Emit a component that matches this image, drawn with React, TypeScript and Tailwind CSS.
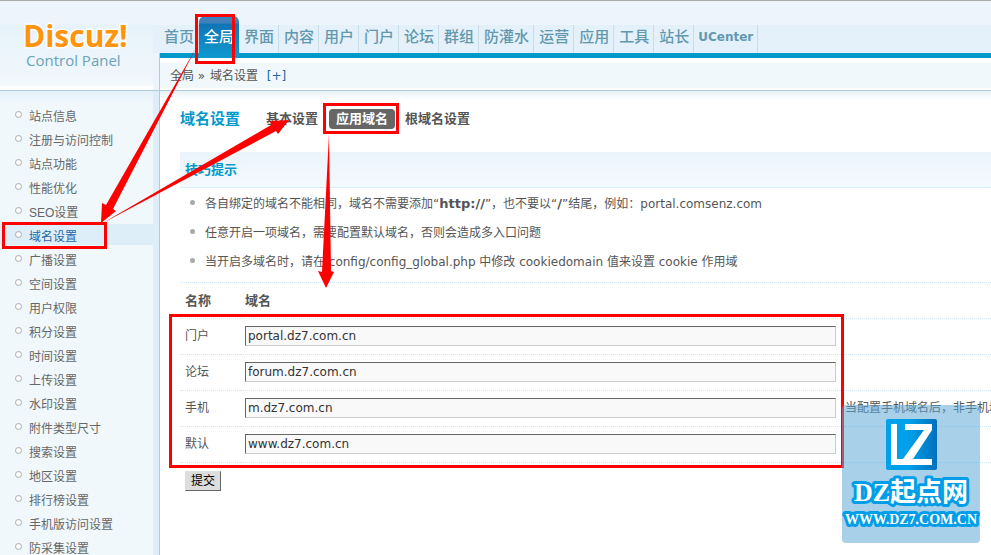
import React from "react";

const navItems = ["首页", "全局", "界面", "内容", "用户", "门户", "论坛", "群组", "防灌水", "运营", "应用", "工具", "站长", "UCenter"];

const menuItems = [
  "站点信息", "注册与访问控制", "站点功能", "性能优化", "SEO设置", "域名设置", "广播设置", "空间设置", "用户权限", "积分设置",
  "时间设置", "上传设置", "水印设置", "附件类型尺寸", "搜索设置", "地区设置", "排行榜设置", "手机版访问设置", "防采集设置",
];

const domains = [
  { id: "portal", label: "门户", value: "portal.dz7.com.cn", note: "" },
  { id: "forum", label: "论坛", value: "forum.dz7.com.cn", note: "" },
  { id: "mobile", label: "手机", value: "m.dz7.com.cn", note: "当配置手机域名后，非手机域名" },
  { id: "default", label: "默认", value: "www.dz7.com.cn", note: "" },
];

function Logo() {
  return (
    <div className="flex h-[89px] w-[153px] shrink-0 flex-col border-b-4 border-white bg-linear-to-b from-[#edf4fc] from-25% via-[#e6f2fa] via-30% to-[#f2f8fc] pt-4 pl-[22px]">
      <svg width="112" height="54" viewBox="0 0 112 54" className="overflow-visible" role="img" aria-label="Discuz! Control Panel">
        <text x="1" y="30" fontSize="30" fontWeight="700" fill="#ff9410" stroke="#ffffff" strokeWidth="3" paintOrder="stroke" className="font-['Open_Sans',sans-serif]">Discuz!</text>
        <text x="4" y="49" fontSize="15" fill="#6ba3b8" className="font-['Open_Sans',sans-serif]">Control Panel</text>
      </svg>
    </div>
  );
}

function Header() {
  return (
    <header className="flex border-t border-[#aaaaaa]">
      <Logo />
      <div className="min-w-0 flex-1 bg-[#edf4fc] pt-6">
        <nav className="flex h-7 bg-[#e4f1fa] pl-[6px] text-[15px] leading-6 font-medium text-[#6298ae]">
          {navItems.map((item) =>
            item === "全局" ? (
              <a key={item} href="#" className="z-10 -mt-[9px] h-[42px] w-10 shrink-0 rounded-t-md bg-linear-to-b from-[#4080bb] from-15% via-[#1175b5] via-20% to-[#0d9ad0] pt-[9px] text-center text-white">{item}</a>
            ) : item === "UCenter" ? (
              <a key={item} href="#" className="shrink-0 border-r border-[#c9dde8] px-1 text-xs leading-6 font-bold">{item}</a>
            ) : (
              <a key={item} href="#" className="flex shrink-0 items-start border-r border-[#c9dde8] pr-1 pl-[5px]">{item}</a>
            ),
          )}
        </nav>
        <div className="pl-[6px]">
          <div className="border-l border-[#b0ccd8] bg-white">
            <div className="h-[5px] bg-[#0099cc]" />
            <div className="border-t-[5px] border-b-2 border-white bg-[#f0f8fb]">
              <p className="h-[25px] pl-[10px] text-xs leading-[26px]">
                全局 <span className="pr-px">»</span> 域名设置 <a href="#" className="pl-[5px] text-[#2366a8]">[+]</a>
              </p>
            </div>
          </div>
        </div>
      </div>
    </header>
  );
}

function Sidebar() {
  return (
    <aside className="w-40 shrink-0 border-r border-[#b0ccd8] bg-[#deeef8] font-['Liberation_Sans','Noto_Sans_CJK_SC',sans-serif]">
      <ul className="mr-[6px] bg-[#f0f8fc] bg-linear-to-b from-[#e4f1fa] to-[#f0f8fc] to-[12px] pt-[13px]">
        {menuItems.map((item) => (
          <li key={item} className="h-6">
            <a
              href="#"
              className={
                item === "域名设置"
                  ? "flex h-[21px] items-center bg-[#deeef8] pt-1 pl-[15px] text-xs text-[#2366a8]"
                  : "flex h-[21px] items-center pt-1 pl-[15px] text-xs text-[#666666]"
              }
            >
              <span className="mr-[7px] mb-1 size-[7px] rounded-full border border-[#aaaaaa] bg-white" />
              {item}
            </a>
          </li>
        ))}
      </ul>
    </aside>
  );
}

function Settings() {
  return (
    <main className="min-w-0 flex-1 bg-white bg-linear-to-b from-[#e6f2f9] to-white to-[9px] pt-4 pl-5">
      <div className="flex h-6 items-center text-[13px] font-bold">
        <h1 className="mr-[22px] text-[15px] text-[#0099cc]">域名设置</h1>
        <a href="#" className="px-1">基本设置</a>
        <a href="#" className="mr-[10px] ml-[7px] h-5 rounded bg-[#666666] px-[7px] leading-5 text-white">应用域名</a>
        <a href="#">根域名设置</a>
      </div>

      <h2 className="mt-[21px] h-9 border-b border-dotted border-[#cfe6f5] bg-linear-to-b from-[#ebf3fc] to-[#f4fafe] pl-[5px] text-[13px] leading-9 font-bold text-[#0099cc]">技巧提示</h2>
      <ul className="border-b border-dotted border-[#cfe6f5] pt-px pb-[5px] pl-[10px] text-xs leading-[29px]">
        <li className="flex items-center"><span className="mr-[10px] mb-1 size-[5px] rounded-full bg-[#aaaaaa]" /><span>各自绑定的域名不能相同，域名不需要添加“<b className="text-[13px]">http://</b>”，也不要以“<b className="text-[13px]">/</b>”结尾，例如：portal.comsenz.com</span></li>
        <li className="flex items-center"><span className="mr-[10px] mb-1 size-[5px] rounded-full bg-[#aaaaaa]" /><span>任意开启一项域名，需要配置默认域名，否则会造成多入口问题</span></li>
        <li className="flex items-center"><span className="mr-[10px] mb-1 size-[5px] rounded-full bg-[#aaaaaa]" /><span>当开启多域名时，请在 config/config_global.php 中修改 cookiedomain 值来设置 cookie 作用域</span></li>
      </ul>

      <form>
        <table className="w-full table-fixed border-collapse text-xs">
          <thead>
            <tr className="h-[35px] border-b border-dotted border-[#cfe6f5] text-left text-[13px]">
              <th className="w-[60px] pl-[5px]">名称</th>
              <th className="w-[600px] pl-[5px]">域名</th>
              <th aria-label="说明" />
            </tr>
          </thead>
          <tbody>
            {domains.map((d) => (
              <tr key={d.id} className="h-9 border-b border-dotted border-[#cfe6f5]">
                <td className="pl-[5px]"><label htmlFor={d.id}>{d.label}</label></td>
                <td className="pr-1 pl-[5px]">
                  <input id={d.id} type="text" defaultValue={d.value} className="block h-5 w-full border border-[#cccccc] border-t-[#666666] border-l-[#666666] bg-[#f9f9f9] px-[2px] text-[#333333]" />
                </td>
                <td className="pl-[5px] whitespace-nowrap">{d.note}</td>
              </tr>
            ))}
          </tbody>
        </table>
        <button type="submit" className="mt-2 ml-[5px] h-5 border border-[#dddddd] border-r-[#666666] border-b-[#666666] bg-[#dddddd] px-[5px] text-xs leading-[18px] text-black">提交</button>
      </form>
    </main>
  );
}

function Annotations() {
  return (
    <svg className="pointer-events-none absolute top-0 left-0 z-20" width="860" height="500" viewBox="0 0 860 500" aria-hidden="true">
      <g fill="none" stroke="#ff0000" strokeWidth="3">
        <rect x="196.500" y="15.500" width="37" height="47" />
        <rect x="3.500" y="223.500" width="102" height="24" />
        <rect x="324.500" y="104.500" width="73" height="28" />
        <rect x="170.500" y="315.500" width="672" height="151" />
      </g>
      <g fill="#ff0000">
        <path d="M196 48 L113 209 L116 211 L101 223 L102 203 L106 205 Z" />
        <path d="M101 224 L271 125 L270 121 L289 120 L278 134 L276 131 Z" />
        <path d="M329 134 L331 271 L334 272 L326 288 L318 271 L322 272 Z" />
      </g>
    </svg>
  );
}

function Watermark() {
  return (
    <svg className="absolute top-[405px] left-[842px] z-30" width="138" height="138" viewBox="0 0 138 138" role="img" aria-label="DZ起点网 WWW.DZ7.COM.CN">
      <defs>
        <linearGradient id="badge" x1="0" x2="1"><stop offset="0.450" stopColor="#00a0ea" /><stop offset="1" stopColor="#0070bd" /></linearGradient>
      </defs>
      <rect width="138" height="138" rx="4" fill="#5ba7d6" fillOpacity="0.530" />
      <rect x="44" y="14" width="51" height="51" rx="2" fill="url(#badge)" />
      <path fill="#ffffff" d="M49 19h6v35h6L82 25H63v-6h27v6L71 54h19v6H49Z" />
      <g fill="#ffffff" stroke="#009ee8" strokeWidth="6" strokeLinejoin="round" paintOrder="stroke" fontWeight="700" textAnchor="middle">
        <text x="69" y="96" fontSize="26" className="font-['Liberation_Serif','Noto_Sans_CJK_SC',serif]">DZ起点网</text>
        <text x="69" y="119" fontSize="14" className="font-['Liberation_Serif',serif]">WWW.DZ7.COM.CN</text>
      </g>
    </svg>
  );
}

export default function App() {
  return (
    <div className="relative h-screen overflow-hidden bg-white font-['DejaVu_Sans','Noto_Sans_CJK_SC',sans-serif] text-[#555555]">
      <Header />
      <div className="flex border-t border-[#b0ccd8]">
        <Sidebar />
        <Settings />
      </div>
      <Annotations />
      <Watermark />
    </div>
  );
}
